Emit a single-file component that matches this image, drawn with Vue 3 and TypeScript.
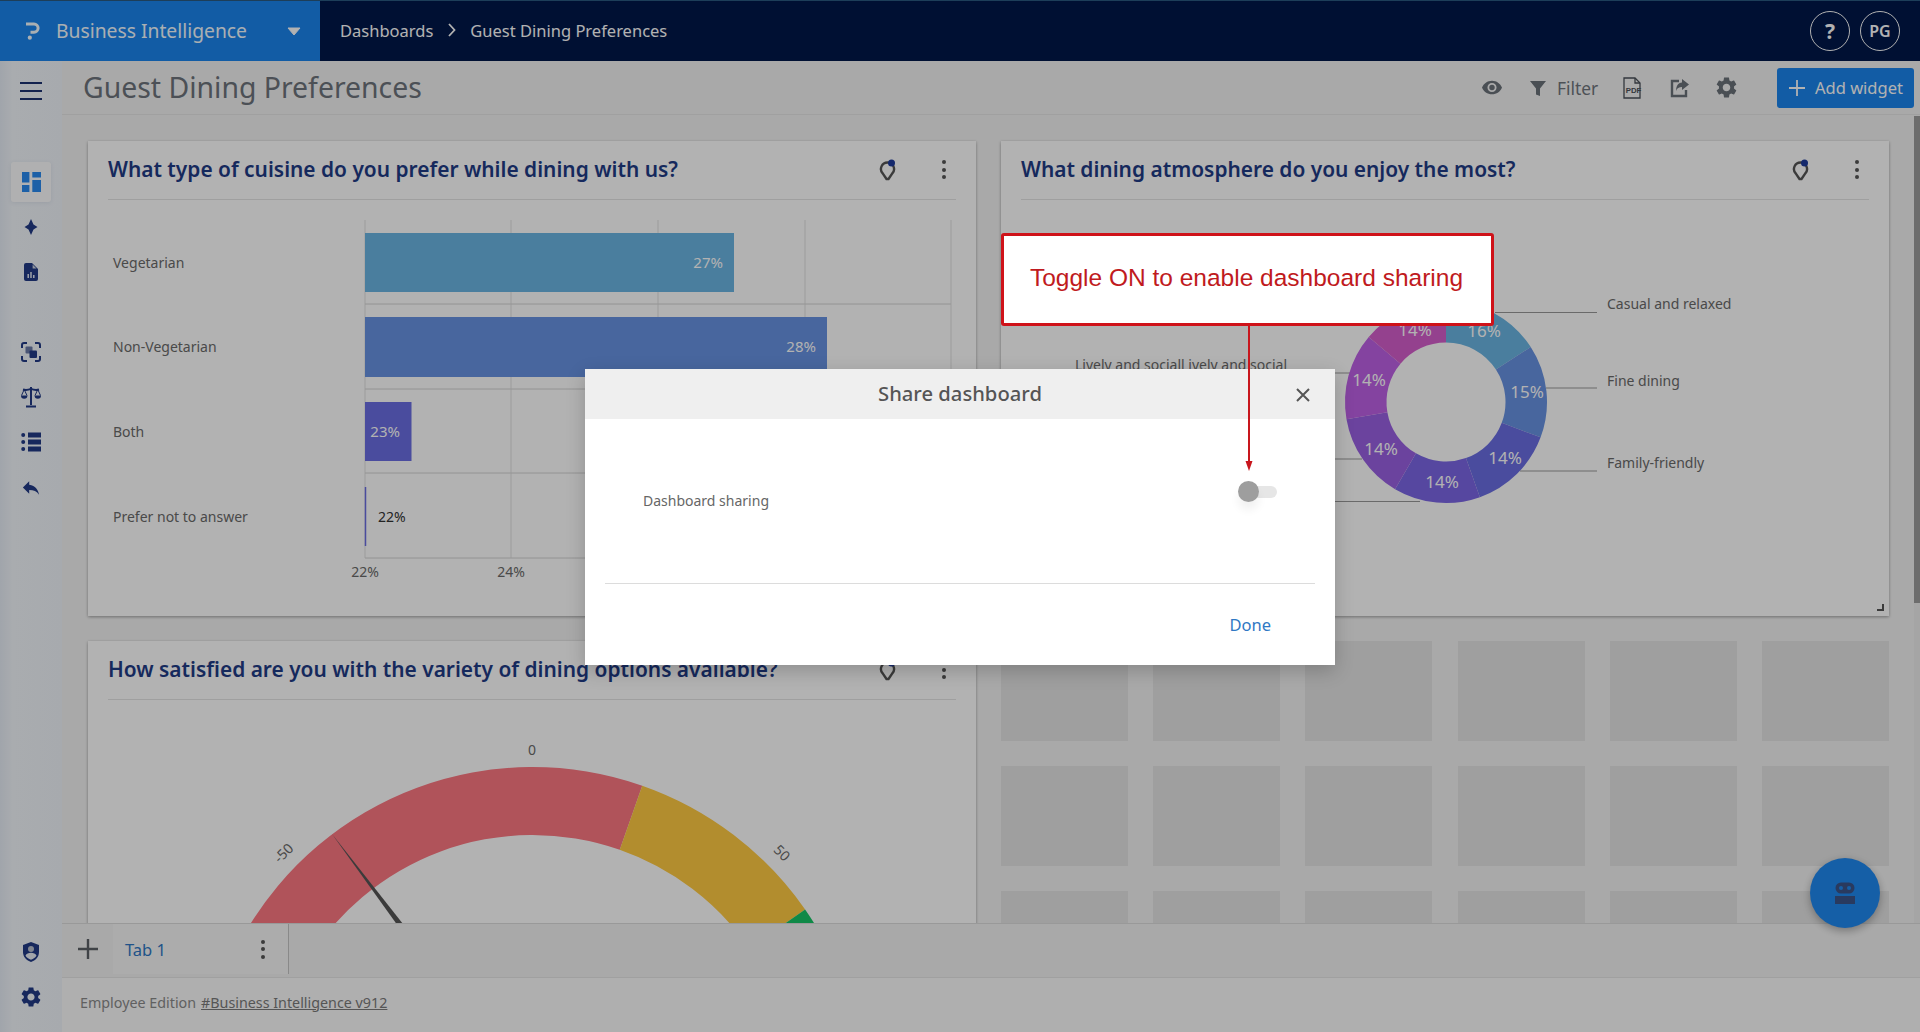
<script setup lang="ts">
const polar = (cx: number, cy: number, r: number, deg: number): [number, number] => {
  const a = ((deg - 90) * Math.PI) / 180
  return [cx + r * Math.cos(a), cy + r * Math.sin(a)]
}
const ring = (cx: number, cy: number, ro: number, ri: number, a0: number, a1: number): string => {
  const [x0, y0] = polar(cx, cy, ro, a0)
  const [x1, y1] = polar(cx, cy, ro, a1)
  const [x2, y2] = polar(cx, cy, ri, a1)
  const [x3, y3] = polar(cx, cy, ri, a0)
  const large = a1 - a0 > 180 ? 1 : 0
  return `M${x0} ${y0}A${ro} ${ro} 0 ${large} 1 ${x1} ${y1}L${x2} ${y2}A${ri} ${ri} 0 ${large} 0 ${x3} ${y3}Z`
}

const bars = [
  { label: 'Vegetarian', y: 233, h: 59, x2: 734, color: '#6ab5e3', value: '27%', vx: 723, ly: 263 },
  { label: 'Non-Vegetarian', y: 317, h: 60, x2: 827, color: '#6792e2', value: '28%', vx: 816, ly: 347 },
  { label: 'Both', y: 402, h: 59, x2: 411.5, color: '#6a6ee2', value: '23%', vx: 400, ly: 432 },
]
const gridX = [365, 511, 658, 805, 951]
const gridY = [304, 389, 473, 558]

const donutData = [
  { share: 16, color: '#6ab5e3' },
  { share: 15, color: '#6792e2' },
  { share: 14, color: '#6a6ee2' },
  { share: 14, color: '#7b66e5' },
  { share: 14, color: '#9a61e3' },
  { share: 14, color: '#bd60e5' },
  { share: 14, color: '#d55dcc' },
]
let acc = 0
const donut = donutData.map((d) => {
  const a0 = (acc / 101) * 360
  acc += d.share
  const a1 = (acc / 101) * 360
  return { d: ring(1446, 402, 101, 59.5, a0, a1), color: d.color }
})
const donutLabels = [
  { t: '16%', x: 1484, y: 331 },
  { t: '15%', x: 1527, y: 392 },
  { t: '14%', x: 1505, y: 458 },
  { t: '14%', x: 1442, y: 482 },
  { t: '14%', x: 1381, y: 449 },
  { t: '14%', x: 1369, y: 380 },
  { t: '14%', x: 1415, y: 330 },
]
const leaders = [
  { x1: 1495, y: 312.5, x2: 1597 },
  { x1: 1546, y: 388, x2: 1597 },
  { x1: 1520, y: 471, x2: 1597 },
  { x1: 1330, y: 373, x2: 1350 },
  { x1: 1330, y: 459, x2: 1362 },
  { x1: 1330, y: 501.5, x2: 1420 },
]
const sideLabels = [
  { t: 'Casual and relaxed', y: 304 },
  { t: 'Fine dining', y: 381 },
  { t: 'Family-friendly', y: 463 },
]

const redArc = ring(532.5, 1099, 332, 264, -60, 19.3)
const yellowArc = ring(532.5, 1099, 332, 264, 19.3, 55.2)
const greenArc = ring(532.5, 1099, 332, 264, 55.2, 90)
const placeholders = Array.from({ length: 18 }, (_, i) => i)
</script>

<template>
  <div class="page">
    <header class="topbar">
      <div class="brand">
        <svg class="logo" viewBox="0 0 14 18" width="14" height="18">
          <path d="M0 2h8a4.100 4.100 0 0 1 0 8.200H4.500" fill="none" stroke="currentColor" stroke-width="3" />
          <circle cx="3.800" cy="15.700" r="2.100" fill="currentColor" />
        </svg>
        <span class="brand-name">Business Intelligence</span>
        <svg class="caret" viewBox="0 0 14 9" width="14" height="9"><path d="M1 1h12L7 8z" fill="currentColor" stroke="currentColor" stroke-linejoin="round" /></svg>
      </div>
      <nav class="crumbs">
        <span>Dashboards</span>
        <svg viewBox="0 0 8 14" width="8" height="14" class="chev"><path d="M1 1l5.500 6L1 13" fill="none" stroke="currentColor" stroke-width="1.800" /></svg>
        <span>Guest Dining Preferences</span>
      </nav>
      <div class="top-actions">
        <span class="circle help">?</span>
        <span class="circle">PG</span>
      </div>
    </header>

    <div class="body">
      <aside class="sidebar">
        <button class="burger"><i></i><i></i><i></i></button>
        <div class="side-group first">
          <span class="side-item active">
            <svg viewBox="0 0 20 20" width="20" height="20"><path d="M1 0h7.400v10.500H1zM1 13h7.400v7H1zM11.300 0H20v5.500h-8.700zM11.300 8H20v12h-8.700z" fill="#2a8af0" /></svg>
          </span>
          <span class="side-item">
            <svg viewBox="0 0 14 16" width="14" height="16"><path d="M7 0L9.500 5.500 13.500 8 9.500 10.500 7 16 4.500 10.500.5 8 4.500 5.500z" fill="#213a86" /></svg>
          </span>
          <span class="side-item">
            <svg viewBox="0 0 14 18" width="14" height="18"><path d="M2 0h6l6 6v10a2 2 0 0 1-2 2H2a2 2 0 0 1-2-2V2a2 2 0 0 1 2-2z" fill="#213a86" /><path d="M8.600 1.500l3.900 3.900H8.600z" fill="#cdd3e0" /><path d="M3.500 11h1.400v4H3.500zM6.300 9h1.400v6H6.300zM9.100 12h1.400v3H9.100z" fill="#f0f4fa" /></svg>
          </span>
        </div>
        <div class="side-group second">
          <span class="side-item">
            <svg viewBox="0 0 20 20" width="20" height="20">
              <path d="M1 6V3a2 2 0 0 1 2-2h3M14 1h3a2 2 0 0 1 2 2v3M19 14v3a2 2 0 0 1-2 2h-3M6 19H3a2 2 0 0 1-2-2v-3" fill="none" stroke="#213a86" stroke-width="2" />
              <rect x="4.500" y="4.500" width="7" height="7" rx="1" fill="#6b7aa8" />
              <rect x="8.500" y="8.500" width="7.500" height="7.500" rx="1" fill="#213a86" />
            </svg>
          </span>
          <span class="side-item">
            <svg viewBox="0 0 22 22" width="22" height="22">
              <path d="M11 1v18M6 20.500h10M3 3.500c3 1 5 .6 8-.6 3 1.200 5 1.600 8 .6" fill="none" stroke="#213a86" stroke-width="2" />
              <path d="M1 9.500a3.200 3.200 0 0 0 6.400 0zM14.600 9.500a3.200 3.200 0 0 0 6.400 0z" fill="#213a86" />
              <path d="M4.200 3.500L1.500 9.500M4.200 3.500L7 9.500M17.800 3.500L15 9.500M17.800 3.500L20.500 9.500" fill="none" stroke="#213a86" stroke-width="1" />
            </svg>
          </span>
          <span class="side-item">
            <svg viewBox="0 0 20 20" width="20" height="20"><circle cx="2.200" cy="3" r="2" fill="#213a86" /><circle cx="2.200" cy="10" r="2" fill="#213a86" /><circle cx="2.200" cy="17" r="2" fill="#213a86" /><path d="M7 .5h13v5H7zM7 7.500h13v5H7zM7 14.500h13v5H7z" fill="#213a86" /></svg>
          </span>
          <span class="side-item">
            <svg viewBox="2 4 20 16" width="18" height="15"><path d="M10 9V5l-7 7 7 7v-4.100c5 0 8.500 1.600 11 5.100-1-5-4-10-11-11z" fill="#213a86" /></svg>
          </span>
        </div>
        <div class="side-group bottom">
          <span class="side-item">
            <svg viewBox="0 0 18 20" width="18" height="20">
              <path d="M9 0l8 3v7c0 5-3.500 8.500-8 10-4.500-1.500-8-5-8-10V3z" fill="#213a86" />
              <circle cx="9" cy="7" r="3" fill="#b9c0cf" />
              <path d="M3.500 13.500c1-2 3-2.800 5.500-2.800s4.500.8 5.500 2.800c-1 2-3 3.500-5.500 4.300-2.500-.8-4.500-2.300-5.500-4.300z" fill="#e9edf4" />
            </svg>
          </span>
          <span class="side-item">
            <svg viewBox="2 2 20 20" width="20" height="20"><path fill="#213a86" d="M19.140 12.940c.04-.3.06-.61.06-.94 0-.32-.02-.64-.07-.94l2.030-1.580c.18-.14.230-.41.120-.61l-1.920-3.320c-.12-.22-.37-.29-.59-.22l-2.390.96c-.5-.38-1.030-.7-1.620-.94l-.36-2.540c-.04-.24-.24-.41-.48-.41h-3.840c-.24 0-.43.170-.47.410l-.36 2.540c-.59.24-1.130.570-1.620.94l-2.390-.96c-.22-.08-.47 0-.59.220L2.740 8.870c-.12.210-.08.470.12.610l2.030 1.580c-.05.3-.09.630-.09.940s.02.640.07.940l-2.030 1.580c-.18.140-.23.410-.12.610l1.920 3.320c.12.220.37.290.59.220l2.390-.96c.5.380 1.030.7 1.620.94l.36 2.540c.05.240.24.410.48.410h3.840c.24 0 .44-.17.47-.41l.36-2.540c.59-.24 1.130-.56 1.620-.94l2.390.96c.22.08.47 0 .59-.22l1.920-3.320c.12-.22.07-.47-.12-.61l-2.010-1.580zM12 15.600c-1.980 0-3.600-1.620-3.600-3.600s1.620-3.600 3.600-3.600 3.600 1.620 3.600 3.600-1.620 3.600-3.600 3.600z" /></svg>
          </span>
        </div>
      </aside>

      <main class="main">
        <div class="toolbar">
          <h1 class="page-title">Guest Dining Preferences</h1>
          <div class="tools">
            <svg class="tool eye" viewBox="1 4 22 16" width="20" height="15"><path fill="#6a7179" d="M12 4.500C7 4.500 2.700 7.600 1 12c1.700 4.400 6 7.500 11 7.500s9.300-3.100 11-7.500c-1.700-4.400-6-7.500-11-7.500zM12 17a5 5 0 1 1 0-10 5 5 0 0 1 0 10zm0-8a3 3 0 1 0 0 6 3 3 0 0 0 0-6z" /></svg>
            <svg class="tool funnel" viewBox="0 0 16 16" width="16" height="16"><path fill="#6a7179" d="M0 1h16L10 8.500V16l-4-1.500v-6z" /></svg>
            <span class="filter-text">Filter</span>
            <svg class="tool pdf" viewBox="0 0 20 22" width="20" height="22">
              <path d="M1 1h11l5 5v15H1z" fill="none" stroke="#4a5058" stroke-width="1.300" />
              <path d="M12 1v5h5" fill="none" stroke="#4a5058" stroke-width="1.300" />
              <text x="10.500" y="16" font-size="7.800" font-weight="700" text-anchor="middle" fill="#4a5058" font-family="'Liberation Sans',sans-serif">PDF</text>
            </svg>
            <svg class="tool share" viewBox="0 0 20 20" width="20" height="20">
              <path d="M9 3H2v15h14v-6" fill="none" stroke="#6a7179" stroke-width="2.400" />
              <path d="M12 1l7 5.500-7 5.500V9c-3 0-5 1-6 4 0-5 2-8 6-8.500z" fill="#6a7179" />
            </svg>
            <svg class="tool gear" viewBox="2 2 20 20" width="21" height="21"><path fill="#6a7179" d="M19.140 12.940c.04-.3.06-.61.06-.94 0-.32-.02-.64-.07-.94l2.030-1.580c.18-.14.230-.41.120-.61l-1.920-3.320c-.12-.22-.37-.29-.59-.22l-2.390.96c-.5-.38-1.030-.7-1.620-.94l-.36-2.540c-.04-.24-.24-.41-.48-.41h-3.840c-.24 0-.43.170-.47.410l-.36 2.540c-.59.24-1.130.570-1.620.94l-2.390-.96c-.22-.08-.47 0-.59.220L2.740 8.870c-.12.210-.08.470.12.610l2.030 1.580c-.05.3-.09.630-.09.940s.02.640.07.940l-2.030 1.580c-.18.140-.23.410-.12.610l1.920 3.320c.12.220.37.290.59.220l2.390-.96c.5.380 1.030.7 1.620.94l.36 2.540c.05.240.24.410.48.410h3.840c.24 0 .44-.17.47-.41l.36-2.540c.59-.24 1.130-.56 1.620-.94l2.390.96c.22.08.47 0 .59-.22l1.920-3.320c.12-.22.07-.47-.12-.61l-2.010-1.580zM12 15.600c-1.980 0-3.600-1.620-3.600-3.600s1.620-3.600 3.600-3.600 3.600 1.620 3.600 3.600-1.620 3.600-3.600 3.600z" /></svg>
            <button class="add-btn">
              <svg viewBox="0 0 16 16" width="16" height="16"><path d="M8 0v16M0 8h16" stroke="#fff" stroke-width="1.800" /></svg>
              <span>Add widget</span>
            </button>
          </div>
        </div>

        <div class="scroll-row">
          <div class="canvas">
            <section class="card">
              <div class="card-head">
                <h2>What type of cuisine do you prefer while dining with us?</h2>
                <svg class="bulb" viewBox="0 0 18 22" width="18" height="22"><path d="M8.500 3.500a6.500 6.500 0 0 0-4.800 10.900L7.500 20h2l3.800-5.600A6.500 6.500 0 0 0 8.500 3.500z" fill="none" stroke="#555" stroke-width="2.400" stroke-linejoin="round" /><circle cx="12.500" cy="4" r="3.500" fill="#1f3c9c" /></svg>
                <span class="dots"><i></i><i></i><i></i></span>
              </div>
              <svg class="chart" viewBox="88 200 888 416" width="888" height="416">
                <line v-for="x in gridX" :key="x" :x1="x" :x2="x" y1="220" y2="558" class="grid-v" />
                <line v-for="y in gridY" :key="y" x1="365" x2="951" :y1="y" :y2="y" class="grid-h" />
                <g v-for="b in bars" :key="b.label">
                  <rect x="365" :y="b.y" :width="b.x2 - 365" :height="b.h" :fill="b.color" />
                  <text x="113" :y="b.ly + 5" class="cat">{{ b.label }}</text>
                  <text :x="b.vx" :y="b.ly + 5" class="val" text-anchor="end">{{ b.value }}</text>
                </g>
                <line x1="365.500" x2="365.500" y1="487" y2="546" stroke="#6a6ee2" stroke-width="1.500" />
                <text x="113" y="522" class="cat">Prefer not to answer</text>
                <text x="378" y="522" class="val-dark">22%</text>
                <text x="365" y="577" class="cat" text-anchor="middle">22%</text>
                <text x="511" y="577" class="cat" text-anchor="middle">24%</text>
              </svg>
            </section>

            <section class="card">
              <div class="card-head">
                <h2>What dining atmosphere do you enjoy the most?</h2>
                <svg class="bulb" viewBox="0 0 18 22" width="18" height="22"><path d="M8.500 3.500a6.500 6.500 0 0 0-4.800 10.900L7.500 20h2l3.800-5.600A6.500 6.500 0 0 0 8.500 3.500z" fill="none" stroke="#555" stroke-width="2.400" stroke-linejoin="round" /><circle cx="12.500" cy="4" r="3.500" fill="#1f3c9c" /></svg>
                <span class="dots"><i></i><i></i><i></i></span>
              </div>
              <svg class="chart" viewBox="1001 200 888 416" width="888" height="416">
                <line v-for="(l, i) in leaders" :key="i" :x1="l.x1" :x2="l.x2" :y1="l.y" :y2="l.y" class="leader" />
                <path v-for="(s, i) in donut" :key="i" :d="s.d" :fill="s.color" />
                <text v-for="(l, i) in donutLabels" :key="i" :x="l.x" :y="l.y + 6" class="pct" text-anchor="middle">{{ l.t }}</text>
                <text v-for="l in sideLabels" :key="l.t" x="1607" :y="l.y + 5" class="cat">{{ l.t }}</text>
                <text x="1075" y="370" class="cat">Lively and sociall ively and social</text>
                <path d="M1884 604v7h-7v-2h5v-5z" fill="#555" />
              </svg>
            </section>

            <section class="card">
              <div class="card-head">
                <h2>How satisfied are you with the variety of dining options available?</h2>
                <svg class="bulb" viewBox="0 0 18 22" width="18" height="22"><path d="M8.500 3.500a6.500 6.500 0 0 0-4.800 10.900L7.500 20h2l3.800-5.600A6.500 6.500 0 0 0 8.500 3.500z" fill="none" stroke="#555" stroke-width="2.400" stroke-linejoin="round" /><circle cx="12.500" cy="4" r="3.500" fill="#1f3c9c" /></svg>
                <span class="dots"><i></i><i></i><i></i></span>
              </div>
              <svg class="chart" viewBox="88 700 888 416" width="888" height="416">
                <path :d="redArc" fill="#fd7782" />
                <path :d="yellowArc" fill="#ffca42" />
                <path :d="greenArc" fill="#16c566" />
                <polygon points="332,834 538,1095 525,1103" fill="#555" />
                <text x="532" y="755" class="cat" text-anchor="middle">0</text>
                <text x="283.500" y="858" class="cat" text-anchor="middle" transform="rotate(-45 283.500 853)">-50</text>
                <text x="782" y="858" class="cat" text-anchor="middle" transform="rotate(45 782 853)">50</text>
              </svg>
            </section>

            <div class="slots">
              <div v-for="p in placeholders" :key="p" class="slot"></div>
            </div>
          </div>
          <div class="scrollbar"><div class="thumb"></div></div>
        </div>

        <div class="tabs">
          <span class="tab-add"><svg viewBox="0 0 20 20" width="20" height="20"><path d="M10 0v20M0 10h20" stroke="#5c6066" stroke-width="2.400" /></svg></span>
          <div class="tab">
            <span class="tab-name">Tab 1</span>
            <span class="dots"><i></i><i></i><i></i></span>
          </div>
        </div>
        <footer class="foot">Employee Edition <u>#Business Intelligence v912</u></footer>
      </main>
    </div>

    <button class="fab">
      <svg viewBox="0 0 22 24" width="22" height="24">
        <rect x="1.500" y="1.500" width="19" height="11" rx="5.500" fill="#3c5389" />
        <circle cx="7" cy="7" r="2" fill="#1f88f0" /><circle cx="15" cy="7" r="2" fill="#1f88f0" />
        <rect x="1" y="15" width="20" height="8" fill="#3c5389" />
      </svg>
    </button>

    <div class="overlay">
      <div class="dialog">
        <div class="dlg-head">
          <span>Share dashboard</span>
          <svg class="close" viewBox="0 0 14 14" width="14" height="14"><path d="M1 1l12 12M13 1L1 13" stroke="#555" stroke-width="2" /></svg>
        </div>
        <div class="dlg-body">
          <span class="dlg-label">Dashboard sharing</span>
          <span class="toggle"><i class="track"></i><i class="knob"></i></span>
        </div>
        <div class="dlg-foot"><button class="done">Done</button></div>
      </div>
    </div>

    <div class="callout">Toggle ON to enable dashboard sharing</div>
    <svg class="arrow" viewBox="0 0 12 146" width="12" height="146"><path d="M6 0v138" stroke="#c8161d" stroke-width="2" /><path d="M2.500 136L6 146l3.500-10z" fill="#c8161d" /></svg>
  </div>
</template>

<style scoped>
.page {
  position: relative;
  width: 100%;
  height: 1032px;
  overflow: hidden;
  display: flex;
  flex-direction: column;
  background: #f3f3f3;
  font-family: "Noto Sans", "Liberation Sans", sans-serif;
}
button { border: 0; background: none; padding: 0; font: inherit; }
.topbar {
  flex: 0 0 61px;
  display: flex;
  align-items: center;
  background: #00174a;
  border-top: 1px solid #2a5a80;
  box-sizing: border-box;
  color: #fff;
}
.brand {
  width: 320px;
  height: 100%;
  display: flex;
  align-items: center;
  background: #1b84ed;
  padding-left: 26px;
  box-sizing: border-box;
}
.logo { color: #f4fbff; margin-right: 16px; flex: none; }
.brand-name { font-size: 19.300px; width: 231px; white-space: nowrap; color: #f4fbff; margin-top: -2px; }
.caret { color: #fff; flex: none; }
.crumbs {
  display: flex;
  align-items: center;
  margin-left: 20px;
  margin-top: -2px;
  font-size: 16.500px;
  color: #fff;
}
.chev { margin: 0 14px 0 15px; }
.top-actions { margin-left: auto; display: flex; gap: 10px; margin-right: 20px; }
.circle {
  width: 40px;
  height: 40px;
  border: 1px solid #fff;
  border-radius: 50%;
  box-sizing: border-box;
  display: flex;
  align-items: center;
  justify-content: center;
  font-size: 16px;
  font-weight: 600;
}
.help { font-size: 21px; font-weight: 700; }
.body { flex: 1; display: flex; min-height: 0; }
.sidebar {
  flex: 0 0 62px;
  position: relative;
  display: flex;
  flex-direction: column;
  align-items: center;
  background: linear-gradient(90deg, #e6ecf5, #f2f6fb 20%, #f0f4fa);
}
.burger {
  display: flex;
  flex-direction: column;
  gap: 6px;
  width: 22px;
  margin-top: 21px;
}
.burger i { display: block; height: 2px; background: #1c3170; }
.side-group { display: flex; flex-direction: column; align-items: center; }
.first { margin-top: 62px; gap: 5px; }
.second { margin-top: 40px; gap: 5px; }
.bottom { margin-top: auto; margin-bottom: 15px; gap: 5px; }
.side-item {
  width: 40px;
  height: 40px;
  display: flex;
  align-items: center;
  justify-content: center;
  border-radius: 3px;
}
.active { background: #fdfdfe; box-shadow: 0 1px 4px rgba(60, 80, 120, .1); }
.main { flex: 1; min-width: 0; display: flex; flex-direction: column; }
.toolbar {
  flex: 0 0 54px;
  display: flex;
  align-items: center;
  border-bottom: 1px solid #e6e6e6;
  box-sizing: border-box;
  padding-left: 21px;
}
.page-title { margin: 0 0 1px; font-size: 28.400px; font-weight: 400; color: #6d737b; }
.tools { margin-left: auto; display: flex; align-items: center; height: 100%; padding-right: 6px; box-sizing: border-box; }
.tool { flex: none; }
.eye { margin-right: 28px; }
.funnel { margin-right: 11px; }
.filter-text { font-size: 17.400px; color: #6f757c; margin-right: 26px; width: 40px; }
.pdf { margin-right: 27px; }
.share { margin-right: 26px; }
.gear { margin-right: 40px; }
.add-btn {
  width: 137px;
  height: 40px;
  background: #1b84ed;
  border-radius: 3px;
  display: flex;
  align-items: center;
  gap: 10px;
  padding-left: 12px;
  box-sizing: border-box;
  color: #fff;
  font-size: 16.500px;
  white-space: nowrap;
}
.scroll-row { flex: 1; min-height: 0; display: flex; }
.canvas {
  flex: 1;
  min-width: 0;
  overflow: hidden;
  display: grid;
  grid-template-columns: 888px 888px;
  grid-template-rows: 475px 475px;
  gap: 25px;
  padding: 26px 0 0 26px;
  box-sizing: border-box;
  align-content: start;
}
.card {
  background: #fff;
  box-shadow: 0 1px 3px rgba(0, 0, 0, .35);
  display: flex;
  flex-direction: column;
  overflow: hidden;
}
.card-head {
  flex: 0 0 59px;
  margin: 0 20px;
  display: flex;
  align-items: center;
  border-bottom: 1px solid #e4e4e4;
  box-sizing: border-box;
  padding-bottom: 3px;
}
.card-head h2 {
  margin: 0;
  font-size: 20.900px;
  font-weight: 600;
  color: #1f3c86;
  white-space: nowrap;
  flex: 1;
}
.bulb { margin-right: 45px; margin-top: 2px; }
.card-head .dots { margin-top: 2px; }
.dots { display: flex; flex-direction: column; gap: 3.500px; width: 4px; margin-right: 10px; }
.dots i { display: block; width: 4px; height: 4px; border-radius: 50%; background: #555; }
.chart { flex: none; display: block; }
.grid-v { stroke: #e0e0e0; stroke-width: 1; }
.grid-h { stroke: #d4d4d4; stroke-width: 1; }
.leader { stroke: #999; stroke-width: 1; }
.cat { font-size: 14px; fill: #6a6a6a; }
.val { font-size: 15px; fill: #fff; }
.val-dark { font-size: 14px; fill: #333; }
.pct { font-size: 17px; fill: #fff; }
.slots {
  display: grid;
  grid-template-columns: repeat(6, 127px);
  grid-auto-rows: 100px;
  column-gap: 25.200px;
  row-gap: 25px;
}
.slot { background: #e4e4e4; }
.scrollbar { flex: 0 0 6px; background: #ececec; margin-top: 1px; }
.thumb { height: 487px; background: #9c9c9c; }
.tabs {
  flex: 0 0 55px;
  display: flex;
  align-items: stretch;
  background: #f3f3f3;
  border-top: 1px solid #dcdcdc;
  border-bottom: 1px solid #e6e6e6;
  box-sizing: border-box;
  padding-bottom: 3px;
}
.tab-add { width: 51px; display: flex; align-items: center; justify-content: center; }
.tab {
  width: 176px;
  display: flex;
  align-items: center;
  justify-content: space-between;
  padding-left: 12px;
  box-sizing: border-box;
  border-right: 1px solid #c4c4c4;
  background: #f6f6f6;
}
.tab-name { font-size: 16.500px; color: #2f78c4; }
.tab .dots { margin-right: 23px; }
.foot {
  flex: 0 0 54px;
  box-sizing: border-box;
  display: flex;
  align-items: center;
  gap: .35em;
  padding: 0 0 6px 18px;
  font-size: 14.300px;
  color: #8a8a8a;
  background: #fbfbfb;
}
.foot u { color: #7a7a7a; }
.fab {
  position: absolute;
  left: 1810px;
  top: 858px;
  width: 70px;
  height: 70px;
  border-radius: 50%;
  background: #1f88f0;
  box-shadow: 0 3px 8px rgba(0, 0, 0, .3);
  display: flex;
  align-items: center;
  justify-content: center;
}
.overlay {
  position: absolute;
  inset: 0;
  padding-top: 2px;
  box-sizing: border-box;
  background: rgba(0, 0, 0, .3);
  display: flex;
  align-items: center;
  justify-content: center;
}
.dialog {
  width: 750px;
  height: 296px;
  background: #fff;
  display: flex;
  flex-direction: column;
  box-shadow: 0 6px 18px rgba(0, 0, 0, .2);
}
.dlg-head {
  flex: 0 0 50px;
  box-sizing: border-box;
  padding-bottom: 2px;
  background: #efefef;
  position: relative;
  display: flex;
  align-items: center;
  justify-content: center;
  font-size: 20.200px;
  font-weight: 500;
  color: #555;
}
.close { position: absolute; right: 25px; top: 19px; }
.dlg-body {
  height: 165px;
  margin: 0 20px;
  position: relative;
  display: flex;
  align-items: center;
  border-bottom: 1px solid #dcdcdc;
  box-sizing: border-box;
  padding-left: 38px;
}
.dlg-label { font-size: 14px; color: #666; position: relative; top: 0; margin-top: -2px; }
.toggle { position: absolute; left: 633px; top: 62px; width: 40px; height: 22px; }
.track { position: absolute; left: 10px; top: 5px; width: 29px; height: 12px; border-radius: 6px; background: #e6e6e6; }
.knob {
  position: absolute;
  left: 0;
  top: 0;
  width: 21px;
  height: 21px;
  border-radius: 50%;
  background: #9e9e9e;
  box-shadow: 0 8px 10px rgba(0, 0, 0, .06);
}
.dlg-foot { flex: 1; display: flex; justify-content: flex-end; align-items: center; padding-right: 64px; }
.done { font-size: 16.500px; color: #2f78c4; }
.callout {
  position: absolute;
  left: 1001px;
  top: 233px;
  width: 493px;
  height: 93px;
  box-sizing: border-box;
  border: 3px solid #cf1219;
  border-radius: 3px;
  padding: 0 2px 3px 0;
  background: #fff;
  display: flex;
  align-items: center;
  justify-content: center;
  font-family: "Liberation Sans", Arial, sans-serif;
  font-size: 24.500px;
  color: #c01a20;
  white-space: nowrap;
}
.arrow { position: absolute; left: 1243px; top: 325px; }
</style>

<style>
html, body { margin: 0; overflow: hidden; }
</style>
